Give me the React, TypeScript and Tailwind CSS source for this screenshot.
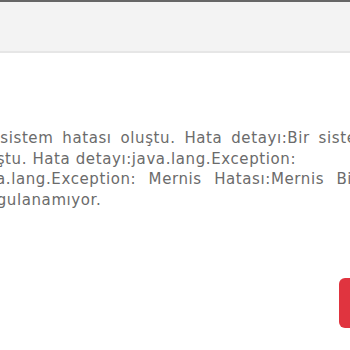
export default function App() {
  return (
    <div className="w-[350px] h-[350px] overflow-hidden bg-white font-['DejaVu_Sans',sans-serif]">
      {/* Başlık alanı */}
      <div className="h-[53px] border-t-2 border-t-[#666666] border-b-2 border-b-[#e6e6e6] bg-[#f3f3f3]" />

      {/* Hata mesajı (iki yana yaslı satırlar) */}
      <div className="pt-[75px] -ml-[28px] text-[15px] leading-[20.5px] tracking-[0.6px] text-[#6b6b6b]">
        <div className="whitespace-nowrap -ml-[3px] [word-spacing:3.5px]">
          Bir sistem hatası oluştu. Hata detayı:Bir sistem hatası
        </div>
        <div className="whitespace-nowrap">oluştu. Hata detayı:java.lang.Exception:</div>
        <div className="whitespace-nowrap [word-spacing:7px]">
          java.lang.Exception: Mernis Hatası:Mernis Bilgileri
        </div>
        <div className="whitespace-nowrap">sorgulanamıyor.</div>
      </div>

      {/* Butonlar */}
      <div className="flex justify-end mt-[68px] -mr-[60px]">
        <button className="w-[71px] h-[50px] rounded-[6px] bg-[#e0343f] text-white" />
      </div>
    </div>
  )
}
